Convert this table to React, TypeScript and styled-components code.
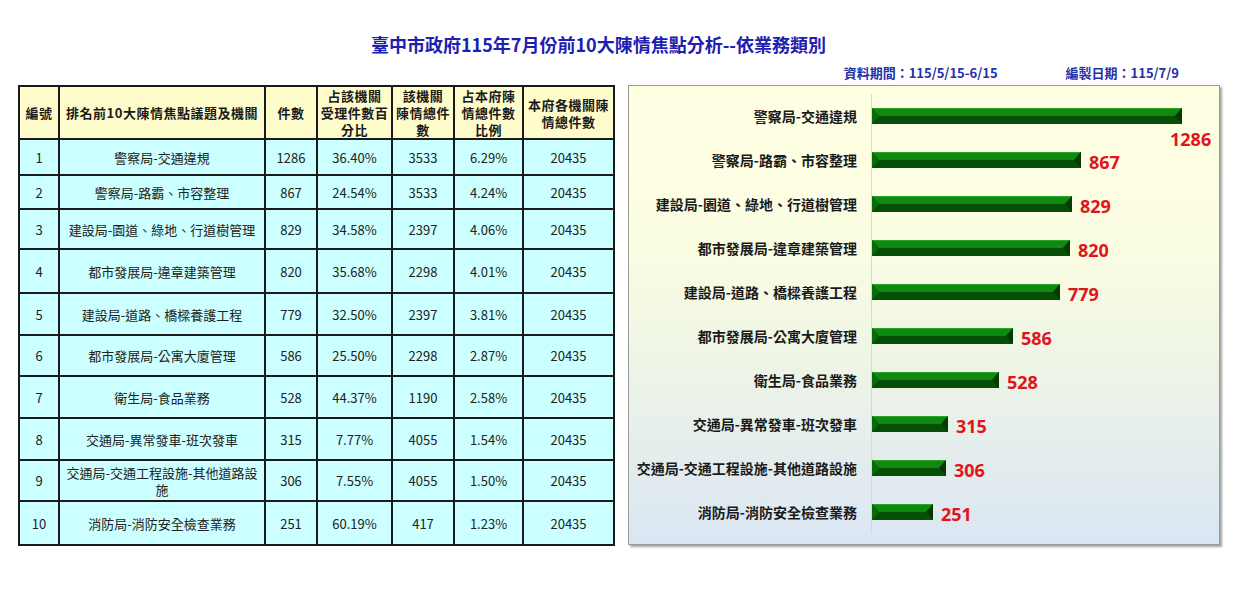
import React from "react";
import styled, { createGlobalStyle } from "styled-components";

const GlobalStyle = createGlobalStyle`
  html, body { margin: 0; padding: 0; background: #ffffff; }
  body { font-family: "Noto Sans CJK TC", "Noto Sans", sans-serif; color: #1a1a1a; }
`;

type Item = {
  no: number;
  name: string;
  count: number;
  pct: string;
  agencyTotal: number;
  cityPct: string;
  h: number;
};

const items: Item[] = [
  { no: 1, name: "警察局-交通違規", count: 1286, pct: "36.40%", agencyTotal: 3533, cityPct: "6.29%", h: 36 },
  { no: 2, name: "警察局-路霸、市容整理", count: 867, pct: "24.54%", agencyTotal: 3533, cityPct: "4.24%", h: 34 },
  { no: 3, name: "建設局-園道、綠地、行道樹管理", count: 829, pct: "34.58%", agencyTotal: 2397, cityPct: "4.06%", h: 40 },
  { no: 4, name: "都市發展局-違章建築管理", count: 820, pct: "35.68%", agencyTotal: 2298, cityPct: "4.01%", h: 44 },
  { no: 5, name: "建設局-道路、橋樑養護工程", count: 779, pct: "32.50%", agencyTotal: 2397, cityPct: "3.81%", h: 42 },
  { no: 6, name: "都市發展局-公寓大廈管理", count: 586, pct: "25.50%", agencyTotal: 2298, cityPct: "2.87%", h: 41 },
  { no: 7, name: "衛生局-食品業務", count: 528, pct: "44.37%", agencyTotal: 1190, cityPct: "2.58%", h: 42 },
  { no: 8, name: "交通局-異常發車-班次發車", count: 315, pct: "7.77%", agencyTotal: 4055, cityPct: "1.54%", h: 42 },
  { no: 9, name: "交通局-交通工程設施-其他道路設施", count: 306, pct: "7.55%", agencyTotal: 4055, cityPct: "1.50%", h: 41 },
  { no: 10, name: "消防局-消防安全檢查業務", count: 251, pct: "60.19%", agencyTotal: 417, cityPct: "1.23%", h: 44 },
];

const CITY_TOTAL = 20435;
const SCALE = 310 / 1286;

const Page = styled.div`
  width: 1247px;
  height: 600px;
  box-sizing: border-box;
  padding-top: 33px;
  overflow: hidden;
`;

const Title = styled.h1`
  margin: 0;
  padding-right: 50px;
  text-align: center;
  font-size: 18px;
  line-height: 22px;
  font-weight: 700;
  color: #2020b0;
`;

const Content = styled.div`
  display: flex;
  align-items: flex-start;
  gap: 13px;
  padding-left: 18px;
  margin-top: 11px;
`;

const TableColumn = styled.div`
  padding-top: 19px;
`;

const Table = styled.table`
  border-collapse: collapse;
  table-layout: fixed;
  width: 595px;
  border: 2px solid #1a1a1a;
  font-size: 13px;
  color: #222;
`;

const HeadCell = styled.th`
  border: 2px solid #1a1a1a;
  background: #fffccc;
  font-weight: 700;
  line-height: 17px;
  letter-spacing: 0.5px;
  padding: 0 2px;
  text-align: center;
  vertical-align: middle;
  color: #1a1a1a;
  white-space: nowrap;
`;

const HeadRow = styled.tr`
  height: 52px;
`;

const BodyRow = styled.tr<{ $h: number }>`
  height: ${(p) => p.$h}px;
`;

const Cell = styled.td`
  border: 2px solid #1a1a1a;
  background: #ccffff;
  text-align: center;
  vertical-align: middle;
  line-height: 17px;
  padding: 0 4px;
`;

const NameCell = styled(Cell)`
  padding: 0 6px;
`;

const ChartColumn = styled.div`
  display: flex;
  flex-direction: column;
  width: 593px;
`;

const MetaLine = styled.div`
  display: flex;
  justify-content: flex-end;
  gap: 68px;
  height: 19px;
  padding-right: 42px;
  font-size: 13px;
  line-height: 14px;
  font-weight: 700;
  color: #2430a8;
`;

const Panel = styled.div`
  box-sizing: border-box;
  width: 592px;
  height: 460px;
  border: 1px solid #9a9a9a;
  box-shadow: 2px 2px 2px rgba(90, 90, 90, 0.55);
  background: linear-gradient(to bottom, #ffffe2 0%, #fbfde2 35%, #eef5e6 60%, #dae6f3 100%);
  display: grid;
  grid-template-columns: 242px 1fr;
  grid-auto-rows: 44px;
  padding: 8px 0 0 0;
`;

const BarLabel = styled.div`
  display: flex;
  align-items: center;
  justify-content: flex-end;
  padding-right: 14px;
  font-size: 14px;
  font-weight: 700;
  color: #1a1a1a;
  white-space: nowrap;
`;

const BarCell = styled.div`
  display: flex;
  align-items: center;
  gap: 8px;
  border-left: 1px solid #d6d9d0;
`;

const ValueLabel = styled.span<{ $below?: boolean }>`
  font-family: "Noto Sans", "Liberation Sans", sans-serif;
  font-size: 18px;
  font-weight: 700;
  color: #e0151c;
  line-height: 20px;
  transform: ${(p) => (p.$below ? "translate(-20px, 23px)" : "translateY(2px)")};
`;

function Bar({ width }: { width: number }) {
  const w = Math.round(width);
  const h = 16;
  const b = 7;
  return (
    <svg width={w} height={h} viewBox={`0 0 ${w} ${h}`} style={{ display: "block", flex: "none" }}>
      <rect x={0} y={0} width={w} height={h} fill="#064f06" />
      <polygon points={`0,0 ${w},0 ${w - b},${h / 2} ${b},${h / 2}`} fill="#0f8a0f" />
      <line x1={1} y1={0.5} x2={w - 1} y2={0.5} stroke="#2aa52a" strokeWidth={1} />
      <polygon points={`0,0 ${b},${h / 2} 0,${h}`} fill="#0a6a0a" />
      <polygon points={`${w},0 ${w},${h} ${w - b},${h / 2}`} fill="#033b03" />
    </svg>
  );
}

export default function App() {
  return (
    <Page>
      <GlobalStyle />
      <Title>臺中市政府115年7月份前10大陳情焦點分析--依業務類別</Title>
      <Content>
        <TableColumn>
          <Table>
            <colgroup>
              <col style={{ width: 40 }} />
              <col style={{ width: 206 }} />
              <col style={{ width: 52 }} />
              <col style={{ width: 75 }} />
              <col style={{ width: 62 }} />
              <col style={{ width: 69 }} />
              <col style={{ width: 91 }} />
            </colgroup>
            <thead>
              <HeadRow>
                <HeadCell>編號</HeadCell>
                <HeadCell>排名前10大陳情焦點議題及機關</HeadCell>
                <HeadCell>件數</HeadCell>
                <HeadCell>
                  占該機關
                  <br />
                  受理件數百
                  <br />
                  分比
                </HeadCell>
                <HeadCell>
                  該機關
                  <br />
                  陳情總件
                  <br />
                  數
                </HeadCell>
                <HeadCell>
                  占本府陳
                  <br />
                  情總件數
                  <br />
                  比例
                </HeadCell>
                <HeadCell>
                  本府各機關陳
                  <br />
                  情總件數
                </HeadCell>
              </HeadRow>
            </thead>
            <tbody>
              {items.map((it) => (
                <BodyRow key={it.no} $h={it.h}>
                  <Cell>{it.no}</Cell>
                  <NameCell>{it.name}</NameCell>
                  <Cell>{it.count}</Cell>
                  <Cell>{it.pct}</Cell>
                  <Cell>{it.agencyTotal}</Cell>
                  <Cell>{it.cityPct}</Cell>
                  <Cell>{CITY_TOTAL}</Cell>
                </BodyRow>
              ))}
            </tbody>
          </Table>
        </TableColumn>
        <ChartColumn>
          <MetaLine>
            <span>資料期間：115/5/15-6/15</span>
            <span>編製日期：115/7/9</span>
          </MetaLine>
          <Panel>
            {items.map((it, i) => (
              <React.Fragment key={it.no}>
                <BarLabel>{it.name}</BarLabel>
                <BarCell>
                  <Bar width={it.count * SCALE} />
                  <ValueLabel $below={i === 0}>{it.count}</ValueLabel>
                </BarCell>
              </React.Fragment>
            ))}
          </Panel>
        </ChartColumn>
      </Content>
    </Page>
  );
}
